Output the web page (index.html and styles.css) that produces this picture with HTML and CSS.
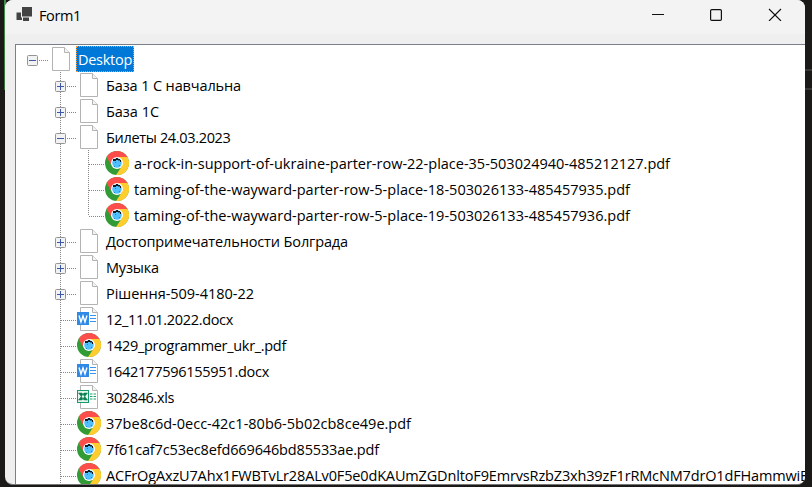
FILE: index.html
```html
<!DOCTYPE html>
<html lang="uk">
<head>
<meta charset="utf-8">
<title>Form1</title>
<link rel="stylesheet" href="styles.css">
</head>
<body>
<svg class="defs" width="0" height="0">
  <symbol id="page" viewBox="0 0 24 26">
    <path d="M3.5 1.5H15.5L20.5 6.5V24.5H3.5Z" fill="#fff" stroke="#b3b3b3"/>
    <path d="M15.5 1.5V6.5H20.5" fill="#f4f4f4" stroke="#b3b3b3"/>
  </symbol>
  <symbol id="chrome" viewBox="0 0 24 26">
    <circle cx="12" cy="13" r="12" fill="#319b35"/>
    <path d="M1.6 7A12 12 0 0 1 22.4 7L12 9L7 16Z" fill="#fd4e4c"/>
    <path d="M22.4 7A12 12 0 0 1 11 25L17 16L13 7Z" fill="#ffcd2e"/>
    <circle cx="12" cy="13" r="6" fill="#fff"/>
    <circle cx="12" cy="13" r="4.8" fill="#4fc0fd"/>
    <path d="M8 11V9H11V8H13V9H15V10H16V12H15V10.6H13V10H11V11Z" fill="#10191f"/>
    <path d="M9 16h1v1h-1zM14 15h1v1h-1zM10 12h1v1h-1z" fill="#168bd8"/>
  </symbol>
  <symbol id="word" viewBox="0 0 24 26">
    <use href="#page" width="24" height="26"/>
    <rect y="6" width="12" height="13" fill="#2e8ae6"/>
    <path d="M2 9.5L4 16L6 10L8 16L10 9.5" fill="none" stroke="#fff" stroke-width="1.4"/>
    <path d="M13 9.5H19M13 12.5H19M13 15.5H19" stroke="#3b95ee"/>
  </symbol>
  <symbol id="excel" viewBox="0 0 24 26">
    <use href="#page" width="24" height="26"/>
    <rect x=".5" y="6.5" width="11" height="12" fill="#e8f5ee" stroke="#109b68"/>
    <path d="M1.5 9H5L10.5 16H7ZM10.5 9H7L1.5 16H5Z" fill="#087f51" stroke="#087f51" stroke-width=".5"/>
    <path d="M13 10H15.5M16.5 10H19M13 12.5H15.5M16.5 12.5H19M13 15H15.5M16.5 15H19" stroke="#1aa272" stroke-width="1.2"/>
  </symbol>
</svg>
<div class="backdrop-mark"></div>
<main class="window">
  <header class="titlebar">
    <svg class="app-icon" width="16" height="16" viewBox="0 0 16 16" fill="#434343">
      <path d="M6 0H16V9.5H6ZM.5 5.5H5V10.5H6V13H.5ZM7 10.5H13V14H7Z"/>
    </svg>
    <span class="title" data-width="42">Form1</span>
    <svg class="controls" width="130" height="14" viewBox="0 0 130 14" fill="none" stroke="#111">
      <path d="M0 7.5H12" stroke-width="1"/>
      <rect x="58.6" y="2.6" width="10.8" height="10.8" rx="1.2" stroke-width="1.2"/>
      <path d="M117 2L129 14M129 2L117 14" stroke-width="1.1"/>
    </svg>
  </header>
  <section class="tree" id="tree"></section>
</main>
<script src="tree.js"></script>
</body>
</html>
```
FILE: styles.css
```css
* { box-sizing: border-box; }
body {
  margin: 0;
  width: 812px;
  height: 487px;
  padding-left: 5px;
  overflow: hidden;
  background: linear-gradient(#429148, #347239) 4px 0 / 2px 90px no-repeat, #1b1a19;
  font-family: "Open Sans", "Noto Sans", sans-serif;
  font-size: 14.5px;
  color: #000;
}
.defs { position: absolute; }
.backdrop-mark {
  position: absolute;
  left: 805px;
  top: 69px;
  width: 7px;
  height: 21px;
  border: solid #383838;
  border-width: 2px 0;
}
.window {
  position: relative;
  width: 800px;
  height: 485px;
  overflow: hidden;
  border-radius: 8px;
  background: #efefef;
  border-bottom: 1px solid #777;
}
.titlebar {
  height: 34px;
  display: flex;
  align-items: flex-start;
  background: #f3f3f3;
  padding: 7px 23px 0 11px;
}
.app-icon { flex: none; }
.title {
  margin-left: 7px;
  margin-top: -2px;
  line-height: 22px;
  white-space: nowrap;
}
.controls { margin-left: auto; flex: none; }
.tree {
  margin: 10px 0 0 10px;
  padding: 1px 0 0 2px;
  width: 800px;
  height: 460px;
  border: 1px solid #7a7f89;
  background: #fff;
  overflow: hidden;
}
.row { display: flex; height: 26px; }
.cell { width: 28px; height: 26px; flex: none; overflow: visible; }
.dots { stroke: #858585; stroke-dasharray: 1 1; fill: none; }
.icon { width: 24px; height: 26px; margin: 0 3px; flex: none; position: relative; }
.label {
  height: 26px;
  line-height: 27px;
  padding: 0 2px;
  white-space: pre;
}
.selected .label {
  color: #fff;
  background: #0078d7;
  outline: 1px dotted #ff9b38;
  outline-offset: -1px;
}
```
FILE: tree.js
```js
// [level, toggle, icon, label, label width]
const nodes = [
  [0, '-', 'page', 'Desktop', 54],
  [1, '+', 'page', 'База 1 С навчальна', 135],
  [1, '+', 'page', 'База 1С', 53],
  [1, '-', 'page', 'Билеты 24.03.2023', 124.5],
  [2, '', 'chrome', 'a-rock-in-support-of-ukraine-parter-row-22-place-35-503024940-485212127.pdf', 536],
  [2, '', 'chrome', 'taming-of-the-wayward-parter-row-5-place-18-503026133-485457935.pdf', 496],
  [2, '', 'chrome', 'taming-of-the-wayward-parter-row-5-place-19-503026133-485457936.pdf', 496],
  [1, '+', 'page', 'Достопримечательности Болграда', 242],
  [1, '+', 'page', 'Музыка', 53],
  [1, '+', 'page', 'Рішення-509-4180-22', 148],
  [1, '', 'word', '12_11.01.2022.docx', 127],
  [1, '', 'chrome', '1429_programmer_ukr_.pdf', 180],
  [1, '', 'word', '1642177596155951.docx', 163],
  [1, '', 'excel', '302846.xls', 68],
  [1, '', 'chrome', '37be8c6d-0ecc-42c1-80b6-5b02cb8ce49e.pdf', 305],
  [1, '', 'chrome', '7f61caf7c53ec8efd669646bd85533ae.pdf', 273],
  [1, '', 'chrome', 'ACFrOgAxzU7Ahx1FWBTvLr28ALv0F5e0dKAUmZGDnltoF9EmrvsRzbZ3xh39zF1rRMcNM7drO1dFHammwiE', 702]
];

function cell(level, column, toggle, last) {
  let marks = '';
  if (column > 0) {
    marks += `<path class="dots" d="M14.5 0V${last && column === level ? 14 : 26}"/>`;
  }
  if (column === level) {
    marks += `<path class="dots" d="M${toggle ? 21 : 15} 14.5H30"/>`;
    if (toggle) {
      marks += '<rect x="9.5" y="9.5" width="10" height="10" rx="1" fill="#f2f2f2" stroke="#949494"/>' +
        '<path d="M11 14.5H18' + (toggle === '+' ? 'M14.5 11V18' : '') + '" stroke="#3c57a5"/>';
    }
  }
  return `<svg class="cell" viewBox="0 0 28 26">${marks}</svg>`;
}

document.getElementById('tree').innerHTML = nodes.map(([level, toggle, icon, label, width], i) => {
  const last = level === 2 && nodes[i + 1][0] < 2;
  let cells = '';
  // The guide of level 1 runs on past the nested rows; level 0 has none.
  for (let c = 0; c <= level; c++) cells += cell(level, c, toggle, last);
  return `<div class="row${i === 0 ? ' selected' : ''}">${cells}` +
    `<svg class="icon" viewBox="0 0 24 26"><use href="#${icon}" width="24" height="26"/></svg>` +
    `<span class="label"><span data-width="${width}">${label}</span></span></div>`;
}).join('');

// Tracks each label so that it fills its nominal width.
document.querySelectorAll('[data-width]').forEach(el => {
  const natural = el.getBoundingClientRect().width;
  el.style.letterSpacing = (el.dataset.width - natural) / el.textContent.length + 'px';
});
```
